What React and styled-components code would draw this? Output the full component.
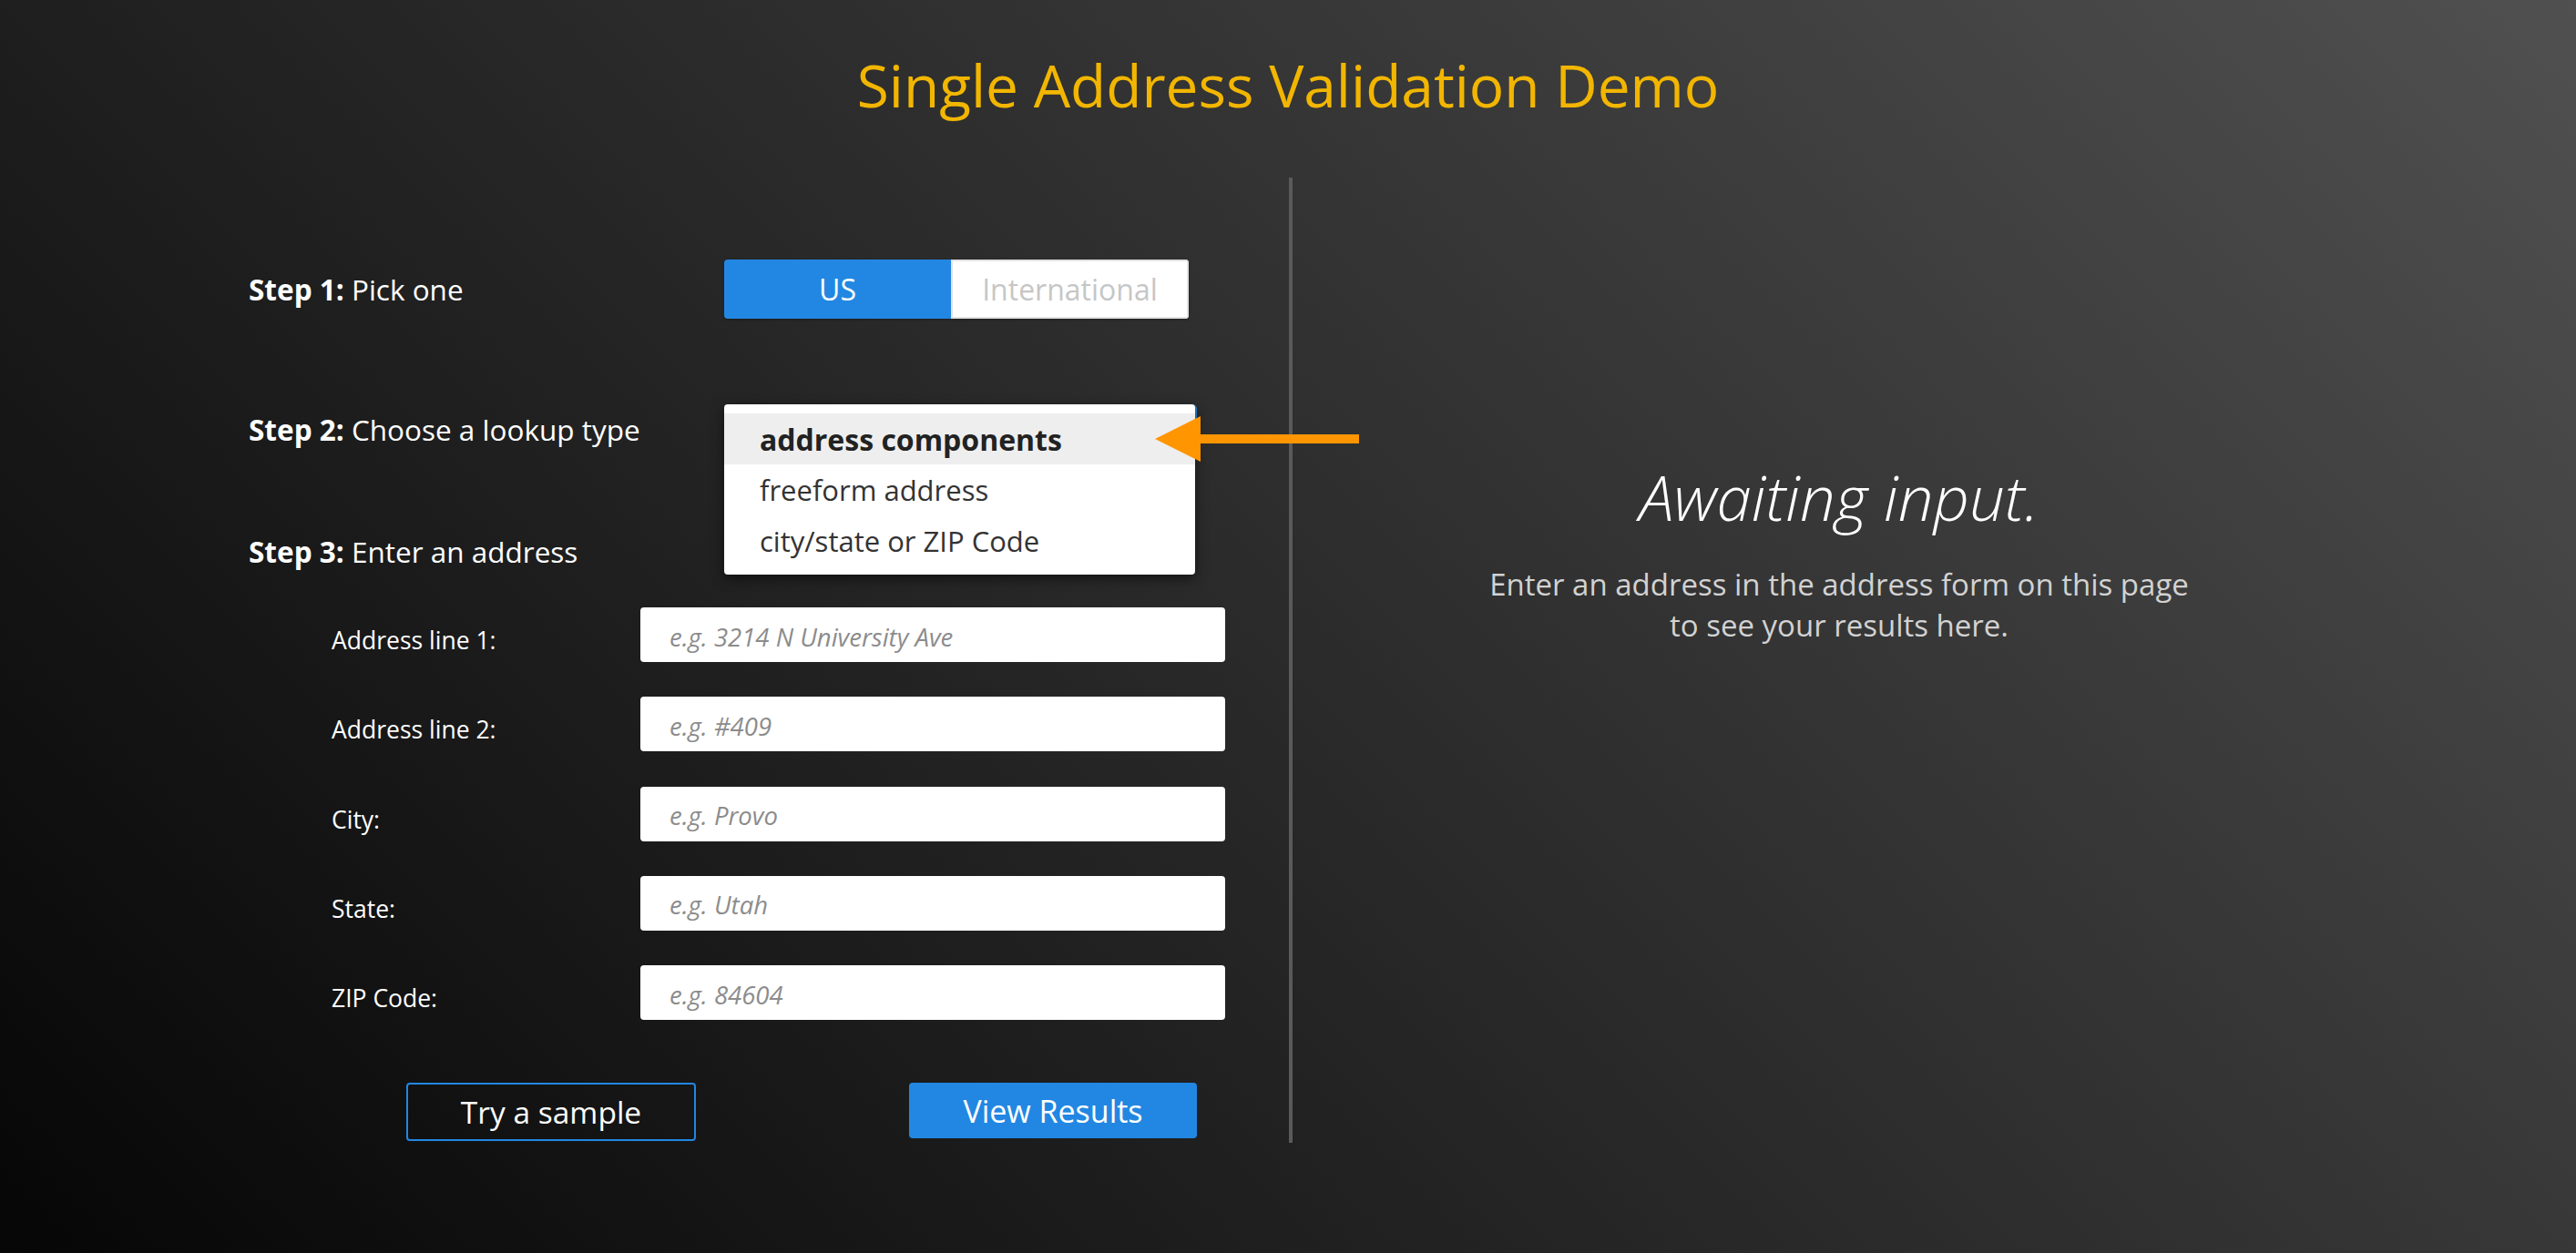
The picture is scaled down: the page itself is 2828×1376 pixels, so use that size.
import React, { useState } from 'react'
import styled, { createGlobalStyle } from 'styled-components'

const blue = '#2287e2'

const GlobalStyle = createGlobalStyle`
  html, body { margin: 0; padding: 0; }
  body {
    font-family: "Open Sans", "Liberation Sans", sans-serif;
    background: linear-gradient(45deg, #060606 0%, #2b2b2b 50%, #505050 100%);
    min-height: 100vh;
    color: #fff;
  }
  * { box-sizing: border-box; }
`

const lookupTypes = ['address components', 'freeform address', 'city/state or ZIP Code']

const fields = [
    { label: 'Address line 1:', placeholder: 'e.g. 3214 N University Ave' },
    { label: 'Address line 2:', placeholder: 'e.g. #409' },
    { label: 'City:', placeholder: 'e.g. Provo' },
    { label: 'State:', placeholder: 'e.g. Utah' },
    { label: 'ZIP Code:', placeholder: 'e.g. 84604' },
]

const App = () => {
    const [country, setCountry] = useState('US')
    const [lookup, setLookup] = useState(0)

    return <>
        <GlobalStyle />
        <Page>
            <Title>Single Address Validation Demo</Title>
            <Columns>
                <FormPanel>
                    <StepRow>
                        <StepLabel><b>Step 1:</b> Pick one</StepLabel>
                        <Toggle>
                            <ToggleButton active={country === 'US'} wide="249px" onClick={() => setCountry('US')}>US</ToggleButton>
                            <ToggleButton active={country === 'International'} wide="261px" onClick={() => setCountry('International')}>International</ToggleButton>
                        </Toggle>
                    </StepRow>

                    <StepRow gap="94px">
                        <StepLabel><b>Step 2:</b> Choose a lookup type</StepLabel>
                        <SelectWrap>
                            <SelectBox />
                            <Menu>
                                {lookupTypes.map((item, i) => (
                                    <MenuItem key={item} selected={i === lookup} onClick={() => setLookup(i)}>{item}</MenuItem>
                                ))}
                            </Menu>
                            <Pointer viewBox="0 0 224 50">
                                <polygon points="0,25 50,0 50,50" fill="#ff9500" />
                                <rect x="48" y="20" width="176" height="10" fill="#ff9500" />
                            </Pointer>
                        </SelectWrap>
                    </StepRow>

                    <StepRow gap="84px" tall="44px">
                        <StepLabel><b>Step 3:</b> Enter an address</StepLabel>
                    </StepRow>

                    <Fields>
                        {fields.map((f) => (
                            <FieldRow key={f.label}>
                                <FieldLabel>{f.label}</FieldLabel>
                                <Input placeholder={f.placeholder} />
                            </FieldRow>
                        ))}
                    </Fields>

                    <Actions>
                        <OutlineButton>Try a sample</OutlineButton>
                        <SolidButton>View Results</SolidButton>
                    </Actions>
                </FormPanel>

                <ResultPanel>
                    <Awaiting>Awaiting input.</Awaiting>
                    <Hint>Enter an address in the address form on this page<br />to see your results here.</Hint>
                </ResultPanel>
            </Columns>
        </Page>
    </>
}

const Page = styled.div`
    min-height: 100vh;
    overflow: hidden;
`

const Title = styled.h1`
    margin: 58px 0 65px;
    text-align: center;
    font-family: "Open Sans", sans-serif;
    font-weight: 400;
    font-size: 64px;
    line-height: 72px;
    color: #f2b600;
`

const Columns = styled.div`
    width: 2402px;
    margin-left: calc(50% - 1197px);
    display: grid;
    grid-template-columns: 1202px 1200px;
`

const FormPanel = styled.div`
    padding: 90px 0 2px 56px;
    border-right: 4px solid #5a5a5a;
    display: flex;
    flex-direction: column;
`

const StepRow = styled.div`
    display: flex;
    align-items: center;
    margin-top: ${p => p.gap || 0};
    min-height: ${p => p.tall || 'auto'};
`

const StepLabel = styled.div`
    width: 522px;
    font-size: 31.5px;
    line-height: 44px;
    color: #fff;
    b { font-weight: 700; }
`

const Toggle = styled.div`
    display: flex;
    height: 65px;
    border-radius: 4px;
    overflow: hidden;
    box-shadow: 0 1px 3px rgba(0,0,0,0.3);
`

const ToggleButton = styled.button`
    width: ${p => p.wide};
    border: ${p => p.active ? 'none' : '2px solid #e2e2e2'};
    background: ${p => p.active ? blue : '#fff'};
    color: ${p => p.active ? '#fff' : '#c6c6c6'};
    font-family: "Open Sans", sans-serif;
    font-size: 32px;
    cursor: pointer;
    padding: 0;
`

const SelectWrap = styled.div`
    position: relative;
    width: 519px;
    height: 56px;
`

const SelectBox = styled.div`
    height: 56px;
    border: 2px solid ${blue};
    border-radius: 5px;
    background: #fff;
`

const Menu = styled.ul`
    position: absolute;
    left: 0;
    top: 0;
    width: 517px;
    margin: 0;
    padding: 10px 0 9px;
    list-style: none;
    background: #fff;
    border-radius: 4px;
    box-shadow: 0 4px 14px rgba(0,0,0,0.55);
    z-index: 2;
`

const MenuItem = styled.li`
    height: 56px;
    display: flex;
    align-items: center;
    padding-left: 39px;
    font-size: ${p => p.selected ? '32px' : '31px'};
    font-weight: ${p => p.selected ? 700 : 400};
    color: ${p => p.selected ? '#222' : '#333'};
    background: ${p => p.selected ? '#eeeeee' : 'transparent'};
    cursor: pointer;
`

const Pointer = styled.svg`
    position: absolute;
    left: 473px;
    top: 13px;
    width: 224px;
    height: 50px;
    z-index: 3;
`

const Fields = styled.div`
    margin-top: 39px;
    padding-left: 91px;
    display: flex;
    flex-direction: column;
    gap: 38.25px;
`

const FieldRow = styled.div`
    display: grid;
    grid-template-columns: 339px 642px;
    align-items: center;
`

const FieldLabel = styled.label`
    font-size: 26.5px;
    padding-top: 12px;
    color: #fff;
`

const Input = styled.input`
    height: 60px;
    border: none;
    border-radius: 4px;
    background: #fff;
    padding: 4px 32px 0;
    font-family: "Open Sans", sans-serif;
    font-size: 27.5px;
    color: #333;
    outline: none;
    &::placeholder {
        color: #8c8c8c;
        font-style: italic;
    }
`

const Actions = styled.div`
    margin-top: 69px;
    padding-left: 173px;
    display: flex;
    align-items: flex-start;
    gap: 234px;
`

const OutlineButton = styled.button`
    width: 318px;
    height: 64px;
    border: 2px solid ${blue};
    border-radius: 4px;
    background: transparent;
    color: #fff;
    font-family: "Open Sans", sans-serif;
    font-size: 33.5px;
    cursor: pointer;
`

const SolidButton = styled.button`
    width: 316px;
    height: 61px;
    border: none;
    border-radius: 4px;
    background: ${blue};
    color: #fff;
    font-family: "Open Sans", sans-serif;
    font-size: 34px;
    cursor: pointer;
`

const ResultPanel = styled.div`
    padding-top: 309px;
    text-align: center;
`

const Awaiting = styled.h2`
    margin: 0 0 32px;
    font-family: "Open Sans", sans-serif;
    font-style: italic;
    font-weight: 300;
    font-size: 69px;
    line-height: 1.2;
    color: #fff;
`

const Hint = styled.p`
    margin: 0;
    font-size: 33px;
    line-height: 45px;
    color: #d2d2d2;
`

export default App
